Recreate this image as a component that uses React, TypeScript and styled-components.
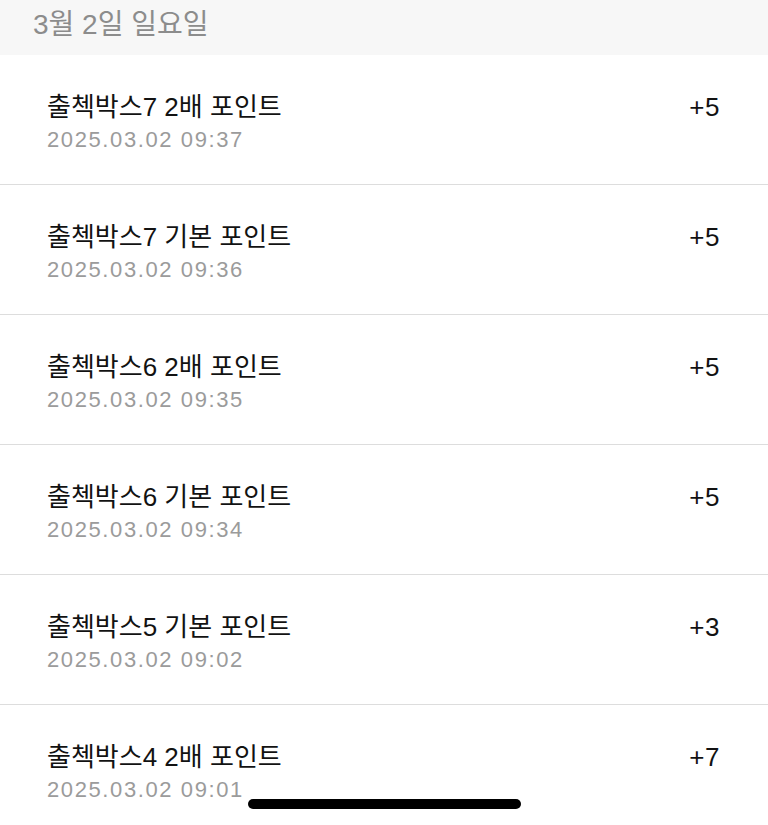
import React from 'react'
import styled, {createGlobalStyle} from 'styled-components'

const GlobalStyle = createGlobalStyle`
    html, body {
        margin: 0;
        padding: 0;
        background: #ffffff;
        overflow: hidden;
    }
    body {
        font-family: 'Liberation Sans', 'Noto Sans CJK KR', sans-serif;
        -webkit-font-smoothing: antialiased;
    }
`

const Page = styled.div`
    width: 768px;
    height: 825px;
    overflow: hidden;
    background: #ffffff;
`

const DateHeader = styled.div`
    height: 55px;
    box-sizing: border-box;
    padding: 8px 0 0 33px;
    background: #f7f7f7;
    color: #8c8c8c;
    font-size: 28px;
    line-height: 34px;
`

const List = styled.ul`
    list-style: none;
    margin: 0;
    padding: 0;
`

const Row = styled.li`
    height: 130px;
    box-sizing: border-box;
    display: flex;
    justify-content: space-between;
    align-items: flex-start;
    padding: 37px 48px 0 47px;
    border-bottom: 1.5px solid #dddddd;
`

const Info = styled.div`
    display: flex;
    flex-direction: column;
    gap: 4px;
`

const Title = styled.span`
    color: #121212;
    font-size: 26px;
    line-height: 30px;
`

const Time = styled.span`
    color: #9b9b9b;
    font-size: 22px;
    line-height: 28px;
    letter-spacing: 1.6px;
`

const Amount = styled.span`
    color: #121212;
    font-size: 26px;
    line-height: 30px;
    letter-spacing: 0.5px;
`

const HomeIndicator = styled.div`
    position: fixed;
    left: 248px;
    bottom: 16px;
    width: 273px;
    height: 10px;
    border-radius: 5px;
    background: #000000;
`

const history = [
    {title: '출첵박스7 2배 포인트', time: '2025.03.02 09:37', amount: '+5'},
    {title: '출첵박스7 기본 포인트', time: '2025.03.02 09:36', amount: '+5'},
    {title: '출첵박스6 2배 포인트', time: '2025.03.02 09:35', amount: '+5'},
    {title: '출첵박스6 기본 포인트', time: '2025.03.02 09:34', amount: '+5'},
    {title: '출첵박스5 기본 포인트', time: '2025.03.02 09:02', amount: '+3'},
    {title: '출첵박스4 2배 포인트', time: '2025.03.02 09:01', amount: '+7'},
]

const App = () => (
    <Page>
        <GlobalStyle />
        <DateHeader>3월 2일 일요일</DateHeader>
        <List>
            {history.map((item) => (
                <Row key={item.time}>
                    <Info>
                        <Title>{item.title}</Title>
                        <Time>{item.time}</Time>
                    </Info>
                    <Amount>{item.amount}</Amount>
                </Row>
            ))}
        </List>
        <HomeIndicator />
    </Page>
)

App.displayName = 'App'
export default App
